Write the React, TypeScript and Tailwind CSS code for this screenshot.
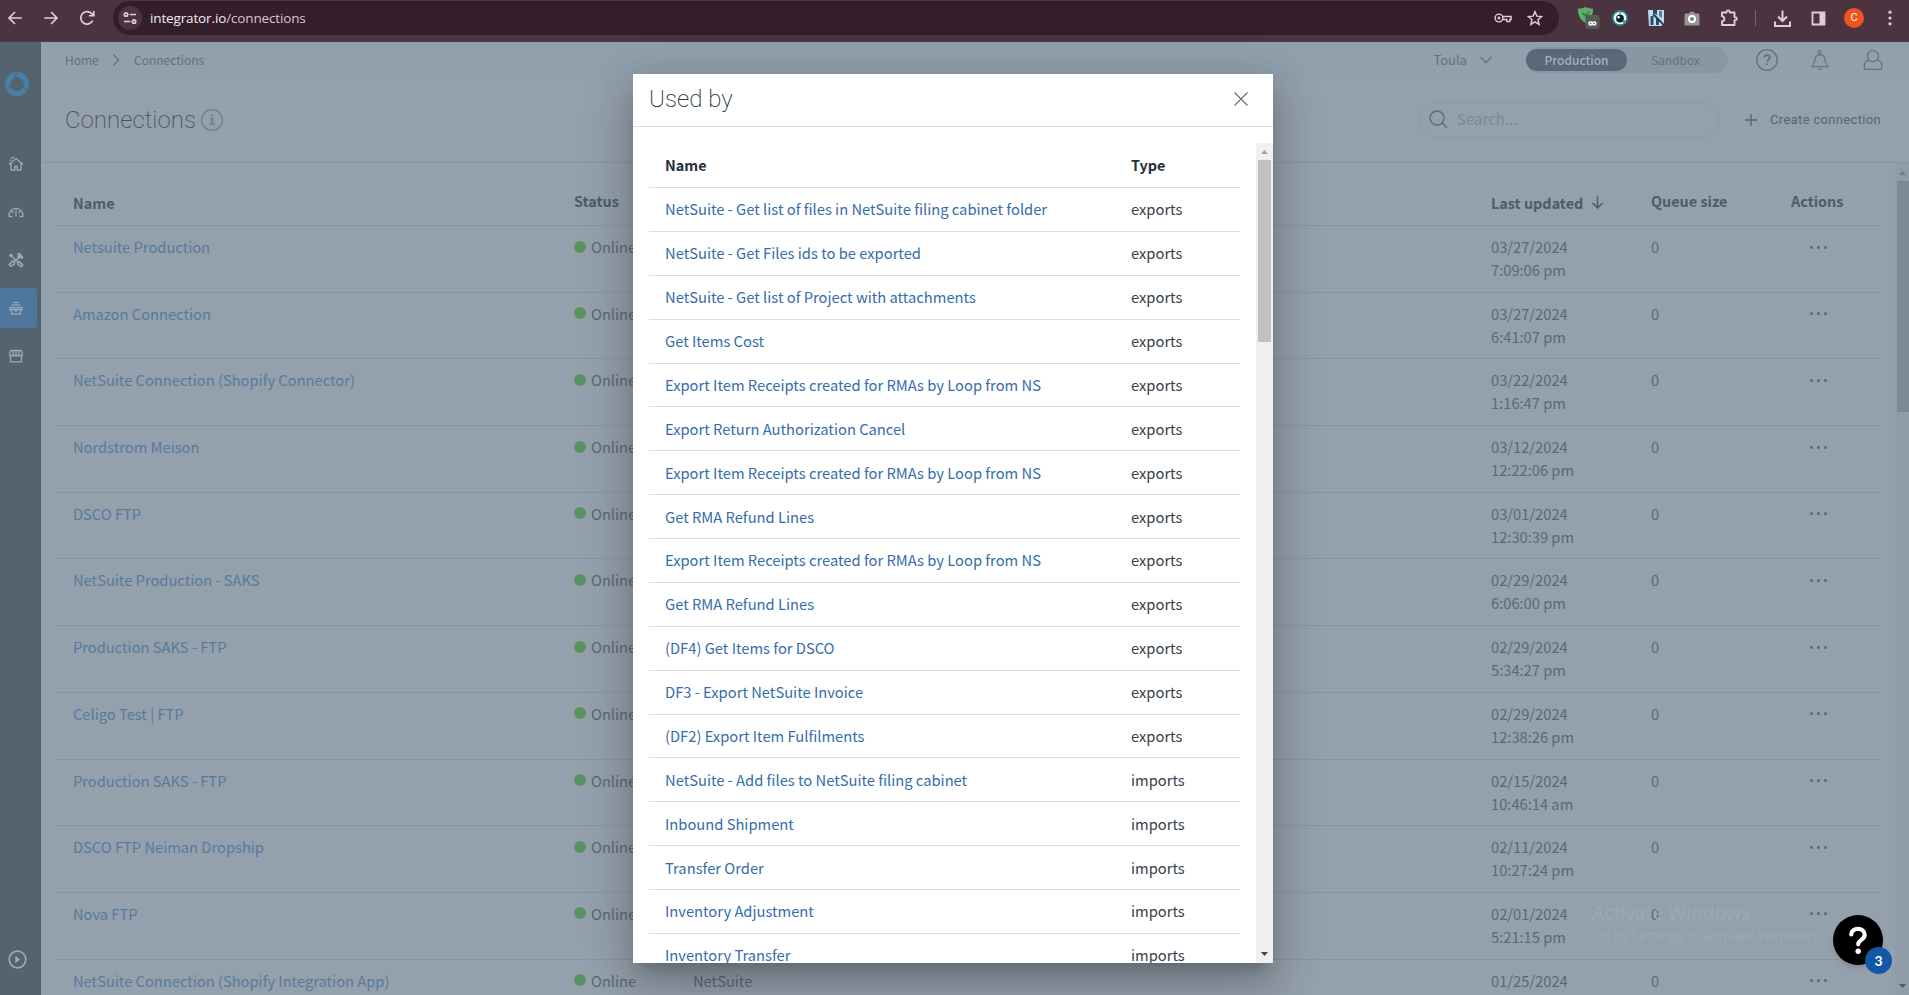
import type { ReactNode } from "react";

type Connection = { name: string; date: string; time: string; type?: string };

const connections: Connection[] = [
  { name: "Netsuite Production", date: "03/27/2024", time: "7:09:06 pm" },
  { name: "Amazon Connection", date: "03/27/2024", time: "6:41:07 pm" },
  { name: "NetSuite Connection (Shopify Connector)", date: "03/22/2024", time: "1:16:47 pm" },
  { name: "Nordstrom Meison", date: "03/12/2024", time: "12:22:06 pm" },
  { name: "DSCO FTP", date: "03/01/2024", time: "12:30:39 pm" },
  { name: "NetSuite Production - SAKS", date: "02/29/2024", time: "6:06:00 pm" },
  { name: "Production SAKS - FTP", date: "02/29/2024", time: "5:34:27 pm" },
  { name: "Celigo Test | FTP", date: "02/29/2024", time: "12:38:26 pm" },
  { name: "Production SAKS - FTP", date: "02/15/2024", time: "10:46:14 am" },
  { name: "DSCO FTP Neiman Dropship", date: "02/11/2024", time: "10:27:24 pm" },
  { name: "Nova FTP", date: "02/01/2024", time: "5:21:15 pm" },
  { name: "NetSuite Connection (Shopify Integration App)", date: "01/25/2024", time: "", type: "NetSuite" },
];

const usedBy: [string, string][] = [
  ["NetSuite - Get list of files in NetSuite filing cabinet folder", "exports"],
  ["NetSuite - Get Files ids to be exported", "exports"],
  ["NetSuite - Get list of Project with attachments", "exports"],
  ["Get Items Cost", "exports"],
  ["Export Item Receipts created for RMAs by Loop from NS", "exports"],
  ["Export Return Authorization Cancel", "exports"],
  ["Export Item Receipts created for RMAs by Loop from NS", "exports"],
  ["Get RMA Refund Lines", "exports"],
  ["Export Item Receipts created for RMAs by Loop from NS", "exports"],
  ["Get RMA Refund Lines", "exports"],
  ["(DF4) Get Items for DSCO", "exports"],
  ["DF3 - Export NetSuite Invoice", "exports"],
  ["(DF2) Export Item Fulfilments", "exports"],
  ["NetSuite - Add files to NetSuite filing cabinet", "imports"],
  ["Inbound Shipment", "imports"],
  ["Transfer Order", "imports"],
  ["Inventory Adjustment", "imports"],
  ["Inventory Transfer", "imports"],
];

function Icon({ className, box = 24, width = 1.5, children }: { className: string; box?: number; width?: number; children: ReactNode }) {
  return (
    <svg className={className} viewBox={`0 0 ${box} ${box}`} fill="none" stroke="currentColor" strokeWidth={width}>
      {children}
    </svg>
  );
}

function BrowserBar() {
  return (
    <div className="flex h-[42px] shrink-0 items-start border-b border-[#44424e] bg-[#4b3440] text-[#e6c9d6]">
      <div className="flex h-9 w-[113px] items-center gap-[18px] pl-[6px]">
        <Icon className="size-[18px]" width={2.3}><path d="M21 12H4.500M12 4 4 12l8 8" /></Icon>
        <Icon className="size-[18px]" width={2.3}><path d="M3 12h16.500M12 4l8 8-8 8" /></Icon>
        <Icon className="size-[18px]" width={2.3}><path d="M19.500 15.500A8.300 8.300 0 1 1 18.200 6.200L21 9M21 2.500V9h-6.500" /></Icon>
      </div>
      <div className="mt-px flex h-[34px] w-[1446px] items-center rounded-full bg-[#331e2a] pl-[5px] pr-[16px]">
        <div className="flex size-6 items-center justify-center rounded-full bg-[#4b3440]">
          <Icon className="size-[14px]" box={14} width={1.700}>
            <circle cx="3" cy="3.500" r="1.700" /><path d="M6.800 3.500H13M1 10.500h6.200" /><circle cx="11" cy="10.500" r="1.700" />
          </Icon>
        </div>
        <div className="ml-2 grow font-['Open_Sans',sans-serif] text-[13.500px] tracking-[-0.140px] text-[#d8c6cf]">
          <span className="text-[#f6eaf0]">integrator.io</span>/connections
        </div>
        <Icon className="mr-[14px] h-[18px] w-5" box={20} width={1.600}>
          <circle cx="5.500" cy="10" r="4.300" /><circle cx="5.500" cy="10" r="0.900" />
          <path d="M9.500 8.300h9.500v3.400h-1.500v2.300h-3.300v-2.300H9.500" />
        </Icon>
        <Icon className="size-4" width={2.200}><path d="m12 2.500 2.800 6.700 7.200.6-5.500 4.700 1.700 7.100L12 17.800l-6.200 3.800 1.700-7.100L2 9.800l7.200-.6z" /></Icon>
      </div>
      <div className="flex h-9 grow items-center pl-[18px]">
        <svg className="h-[24px] w-[23px] shrink-0" viewBox="0 0 23 24">
          <path d="M1 2.500c3 0 5-.3 7.500-1.500 2.500 1.200 4.500 1.500 7.500 1.500.3 7-2.500 11.500-7.500 14.500C3.500 14 .7 9.500 1 2.500z" fill="#5fae68" />
          <path d="m5.500 7 3 3 4-4.500" fill="none" stroke="#3b7d48" strokeWidth="1.800" />
          <rect x="8.500" y="9" width="14" height="14" rx="3" fill="#555a57" />
          <g fill="none" stroke="#fff" strokeWidth="1.500"><circle cx="13.600" cy="17.500" r="1.600" /><circle cx="17.200" cy="17.500" r="1.600" /></g>
        </svg>
        <svg className="ml-[12px] size-4 shrink-0" viewBox="0 0 16 16">
          <circle cx="8" cy="8" r="8" fill="#17868f" /><circle cx="8" cy="8" r="6.300" fill="#fff" /><circle cx="8" cy="8.500" r="3.900" fill="#06222b" /><circle cx="6.600" cy="7.300" r="1.300" fill="#fff" />
          <path d="M9 1.500 7.500 4M13 10.500l-2 2" stroke="#17868f" strokeWidth="1.200" />
        </svg>
        <svg className="ml-5 size-4 shrink-0" viewBox="0 0 16 16">
          <path d="M0 0h16v14l-3 2H1z" fill="#c9dcea" /><path d="M5 0h4v5L5 3zM2.500 6h3v9h-3zM8 7l3 2v6H8z" fill="#1d4f78" /><path d="m5 4 11 11" stroke="#173f63" strokeWidth="1.800" /><path d="M11 1h3v7l-3-2z" fill="#4f82ab" />
        </svg>
        <svg className="ml-5 h-[15px] w-4 shrink-0" viewBox="0 0 16 15">
          <path d="M2 2.500h3L6.300.8h3.400L11 2.500h3c1 0 1.500.6 1.500 1.500v9c0 1-.5 1.500-1.500 1.500H2c-1 0-1.500-.5-1.500-1.500V4c0-.9.5-1.500 1.500-1.500z" fill="#989596" />
          <circle cx="8" cy="8" r="3" fill="#77787a" stroke="#fff" strokeWidth="2" />
        </svg>
        <Icon className="ml-5 size-[18px] shrink-0" box={18} width={1.900}>
          <path d="M2 3.500h4.500V3a1.600 1.600 0 0 1 3.200 0v.5H14.500v4.700h.6a1.600 1.600 0 0 1 0 3.200h-.6V16H2v-3.700c3.200 0 3.200-5 0-5z" strokeLinejoin="round" />
        </Icon>
        <div className="ml-[17px] h-4 w-px bg-[#7a6571]" />
        <Icon className="ml-[18px] size-[17px] shrink-0" box={17} width={2}><path d="M8.500.5v10M4 6.500 8.500 11 13 6.500M1 11.500V16h15v-4.500" /></Icon>
        <svg className="ml-5 size-[15px] shrink-0" viewBox="0 0 15 15"><path d="M1.500 1.500h12v12h-12z" fill="none" stroke="currentColor" strokeWidth="1.800" /><path d="M8.500 1H14v13H8.500z" fill="currentColor" /></svg>
        <div className="ml-[18px] flex size-5 shrink-0 items-center justify-center rounded-full bg-[#f4511e] font-['Roboto',sans-serif] text-[11px] text-white">C</div>
        <svg className="ml-[24px] h-4 w-1 shrink-0" viewBox="0 0 4 16" fill="currentColor"><circle cx="2" cy="2.200" r="1.600" /><circle cx="2" cy="8" r="1.600" /><circle cx="2" cy="13.800" r="1.600" /></svg>
      </div>
    </div>
  );
}

function Sidebar() {
  return (
    <nav className="flex w-[41px] shrink-0 flex-col bg-[#546370] text-[#9eabb6]">
      <svg className="ml-[5px] mt-[30px] size-6" viewBox="0 0 24 24" fill="none" stroke="#4581a8" strokeWidth="5">
        <circle cx="12" cy="12" r="9.400" />
        <path d="M12 0 9.500 6M1.500 16.500l6-2M17 13.500l4.500 5" stroke="#546370" strokeWidth="1.300" />
      </svg>
      <div className="mt-[48px] flex h-10 w-[37px] items-center pl-2">
        <Icon className="size-4" box={16} width={1.300}><path d="m1 8.500 7-6 7 6M3 7.500v6.700h3.800V10.500h2.400v3.700H13V7.500M2.500 5V3.500M3 2.200 6 1.300" /></Icon>
      </div>
      <div className="mt-2 flex h-10 w-[37px] items-center pl-2">
        <Icon className="size-4" box={16} width={1.300}><path d="M4.500 12.500H1.200a6.900 6.900 0 1 1 13.600 0h-3.300M8 5.500v7M3.700 7.200l1.600 2M12.300 7.200l-1.600 2" /></Icon>
      </div>
      <div className="mt-2 flex h-10 w-[37px] items-center pl-2">
        <Icon className="size-4" box={16} width={1.500}>
          <path d="M5 5.500 11 11M9.800 10.800l1.500-1.300 3.500 3.500-1.800 1.800-3.500-3zM6.500 10.300 4.800 8.800 1.300 12.500 3 14.300l3.500-2.500zM6.500 9.500 11 5.500" />
          <path d="M.8 3.500 3 1.300l2.500 2.500L3.800 6zM8.800 2l3-1.200 3.800 4.500-2 2-1.500-1.500L11 7 9 5l1.300-1.300z" fill="currentColor" stroke="none" />
        </Icon>
      </div>
      <div className="mt-2 flex h-10 w-[37px] items-center rounded-r-[3px] bg-[#4f769d] pl-2">
        <Icon className="size-4" box={16} width={1.200}><path d="M5 2.600h6M3.300 5h9.400M2 7.600h12v2H2zM3.200 9.600l.5 4.600h8.600l.5-4.600M6.300 11h3.400" /></Icon>
      </div>
      <div className="mt-2 flex h-10 w-[37px] items-center pl-2">
        <Icon className="size-4" box={16} width={1.300}><path d="M2.500 2.500h11l1 4c0 2-2.500 2-3.200 0-.5 2-2.800 2-3.300 0-.5 2-2.800 2-3.300 0-.7 2-3.200 2-3.200 0zM2.500 8v5.800h11V8M5.500 2.500l-.7 4M8 2.500v4M10.500 2.500l.7 4" /></Icon>
      </div>
      <div className="mt-auto pb-[26px] pl-2">
        <svg className="size-[19px]" viewBox="0 0 19 19"><circle cx="9.500" cy="9.500" r="8.300" fill="none" stroke="currentColor" strokeWidth="1.700" /><path d="m7.300 5.800 4.700 3.700-4.700 3.700z" fill="currentColor" /></svg>
      </div>
    </nav>
  );
}

function PageHeader() {
  return (
    <>
      <div className="flex h-[37px] shrink-0 items-center bg-[#90a0ac] pb-[2px] pl-6 pr-[26px] text-[12px] text-[#64727e]">
        <span className="w-[45px]">Home</span>
        <Icon className="size-[12px]" box={12} width={1.200}><path d="m3.500.5 5 5.500-5 5.500" /></Icon>
        <span className="ml-[12px] grow">Connections</span>
        <span className="text-[13px]">Toula</span>
        <Icon className="ml-[13px] mr-[34px] size-[12px]" box={12} width={1.300}><path d="m.5 3 5.500 5.500L11.500 3" /></Icon>
        <div className="flex h-[26px] w-[202px] items-center rounded-full bg-[#8797a4] text-center">
          <span className="h-[22px] w-[101px] rounded-full bg-[#596977] font-medium leading-[21px] text-[#a3afba]">Production</span>
          <span className="w-[97px] leading-[21px]">Sandbox</span>
        </div>
        <Icon className="ml-[28px] size-[22px]" box={22} width={1.300}>
          <circle cx="11" cy="11" r="10.300" /><path d="M8.300 8.700c0-3.500 5.400-3.300 5.400 0 0 1.700-2.500 1.900-2.500 4M11.200 14.200v1.800" strokeWidth="1.800" />
        </Icon>
        <Icon className="ml-[32px] size-[20px]" box={20} width={1.200}>
          <path d="M2 16.700h16c-1.500-2-2.700-4-3-7C14.700 6.300 13 4.800 10 4.800S5.300 6.300 5 9.700c-.3 3-1.500 5-3 7zM8 19.200h4" /><circle cx="9.500" cy="2.200" r="1.600" />
        </Icon>
        <Icon className="ml-[33px] size-[20px]" box={20} width={1.300}>
          <circle cx="10" cy="6.200" r="5.500" /><path d="M6 10c-3.500 1-4.700 3-4.700 5v3.300c0 .7.400 1 1 1h15.400c.6 0 1-.3 1-1V15c0-2-1.200-4-4.700-5" />
        </Icon>
      </div>
      <div className="flex h-[84px] shrink-0 items-center border-b border-[#8795a2] pb-[2px] pl-[24px] pr-[28px]">
        <h1 className="font-['Roboto',sans-serif] text-[24px] font-extralight leading-none text-[#465561]">Connections</h1>
        <Icon className="ml-[5px] size-[22px] text-[#6f7f8c]" box={22} width={1.200}>
          <circle cx="11" cy="11" r="10.300" /><path d="M9 9.500h2.300V15M8.700 15.200h5" strokeWidth="1.700" /><path d="M10 6.500h1.800" strokeWidth="2" />
        </Icon>
        <div className="ml-auto flex h-9 w-[300px] items-center rounded-full border border-[#8b99a5] pl-[9px] text-[15px] text-[#7b8995]">
          <Icon className="mr-[9px] size-[19px] text-[#5d6c79]" box={19} width={1.300}><circle cx="8" cy="8" r="7" /><path d="m13 13 5 5" /></Icon>
          Search...
        </div>
        <Icon className="ml-[26px] size-[12px] text-[#566572]" box={12} width={1.300}><path d="M6 0v12M0 6h12" /></Icon>
        <span className="ml-[13px] font-['Roboto',sans-serif] text-[13px] tracking-[0.330px] text-[#566572]">Create connection</span>
      </div>
    </>
  );
}

const columns = "grid grid-cols-[501px_119px_798px_160px_140px_1fr] pl-[17px]";

function ConnectionsTable() {
  return (
    <div className="flex min-h-0 grow">
      <div className="w-[1854px] shrink-0 overflow-hidden pl-[15px] pr-[15px] text-[14.700px] leading-[23px] text-[#5b6975]">
        <div className={`${columns} h-[63px] border-b border-[#8896a3] pt-[26px] text-[14.400px] font-semibold text-[#4d5c69]`}>
          <span className="pt-[2px]">Name</span>
          <span>Status</span>
          <span />
          <span className="flex h-[25px] items-center gap-2 pt-[2px]">Last updated
            <Icon className="size-[13px]" box={13} width={1.500}><path d="M6.500.5V12M1.500 7l5 5 5-5" /></Icon>
          </span>
          <span>Queue size</span>
          <span>Actions</span>
        </div>
        {connections.map((c, i) => (
          <div key={i} className={`${columns} h-[66.700px] border-b border-[#8896a3] pt-[9px]`}>
            <span className="text-[#587a9c]">{c.name}</span>
            <span className="flex h-[23px] items-center gap-[5px]"><i className="size-3 rounded-full bg-[#58945f]" />Online</span>
            <span>{c.type}</span>
            <span>{c.date}<br />{c.time}</span>
            <span>0</span>
            <span className="flex h-[24px] items-center gap-[4px] pl-[19px]">
              <i className="size-[3px] rounded-full bg-current" /><i className="size-[3px] rounded-full bg-current" /><i className="size-[3px] rounded-full bg-current" />
            </span>
          </div>
        ))}
      </div>
      <div className="ml-auto flex w-[14px] flex-col items-center bg-[#909da9] pb-[7px] pt-[8px]">
        <svg className="h-1 w-[7px]" viewBox="0 0 7 4"><path d="M0 4 3.500 0 7 4z" fill="#6d7b87" /></svg>
        <div className="ml-[2px] mt-[6px] h-[231px] w-3 bg-[#7c8995]" />
        <svg className="mt-auto h-1 w-[7px]" viewBox="0 0 7 4"><path d="M0 0 3.500 4 7 0z" fill="#4d5b66" /></svg>
      </div>
    </div>
  );
}

function UsedByDialog() {
  return (
    <div className="absolute left-[633px] top-[74px] flex h-[889px] w-[640px] flex-col bg-white shadow-[0_11px_15px_-7px_rgba(0,0,0,0.2),0_24px_38px_3px_rgba(0,0,0,0.14),0_9px_46px_8px_rgba(0,0,0,0.12)]">
      <div className="flex h-[53px] shrink-0 items-center justify-between border-b border-[#d6e0e6] pb-[2px] pl-4 pr-[25px]">
        <h2 className="font-['Roboto',sans-serif] text-[24px] font-extralight leading-none text-[#26343c]">Used by</h2>
        <Icon className="size-[14px] text-[#5f717e]" box={14} width={1.200}><path d="m.5.5 13 13M13.500.5l-13 13" /></Icon>
      </div>
      <div className="flex min-h-0 grow pt-4">
        <div className="min-w-0 grow overflow-hidden pl-4 pr-4 text-[14.720px] leading-[22px] text-[#37414b]">
          <div className="flex h-[45px] items-center border-b border-[#d6e0e6] pl-4 text-[14.400px] font-semibold text-[#25303a]">
            <span className="w-[466px]">Name</span><span>Type</span>
          </div>
          {usedBy.map(([name, kind], i) => (
            <div key={i} className="flex h-[43.880px] items-center border-b border-[#d6e0e6] pl-4">
              <span className="w-[466px] text-[#366cab]">{name}</span><span>{kind}</span>
            </div>
          ))}
        </div>
        <div className="flex w-[17px] shrink-0 flex-col items-center bg-[#f0f0f0] py-[7px]">
          <svg className="h-1 w-[7px]" viewBox="0 0 7 4"><path d="M0 4 3.500 0 7 4z" fill="#a3a3a3" /></svg>
          <div className="mt-[6px] h-[182px] w-[13px] bg-[#c1c1c1]" />
          <svg className="mt-auto h-1 w-[7px]" viewBox="0 0 7 4"><path d="M0 0 3.500 4 7 0z" fill="#454545" /></svg>
        </div>
      </div>
    </div>
  );
}

export default function App() {
  return (
    <div className="relative flex h-[995px] w-full flex-col overflow-hidden bg-[#94a0ac] font-['Noto_Sans_CJK_SC',sans-serif]">
      <BrowserBar />
      <div className="flex min-h-0 grow">
        <Sidebar />
        <main className="flex min-w-0 grow flex-col">
          <PageHeader />
          <ConnectionsTable />
        </main>
      </div>
      <UsedByDialog />
      <div className="absolute left-[1592px] top-[898px] font-['Open_Sans',sans-serif] text-[#9fa8b1]">
        <div className="text-[19.300px] leading-[30px]">Activate Windows</div>
        <div className="text-[14px] leading-[16px]">Go to Settings to activate Windows.</div>
      </div>
      <div className="absolute left-[1833px] top-[915px] flex size-[50px] items-center justify-center rounded-full bg-black shadow-md">
        <svg className="size-[30px]" viewBox="0 0 30 30" fill="none" stroke="#fff" strokeWidth="4.200" strokeLinecap="round"><path d="M8.300 9.500c0-7.500 13.400-7.500 13.400.5 0 5-6.500 4.700-6.500 9.300" /><path d="M15.200 26.200v.1" strokeWidth="5.400" /></svg>
        <div className="absolute left-[32px] top-[32px] flex size-[27px] items-center justify-center rounded-full bg-[#1158a6] font-['Lato',sans-serif] text-[14px] font-bold text-white">3</div>
      </div>
    </div>
  );
}
